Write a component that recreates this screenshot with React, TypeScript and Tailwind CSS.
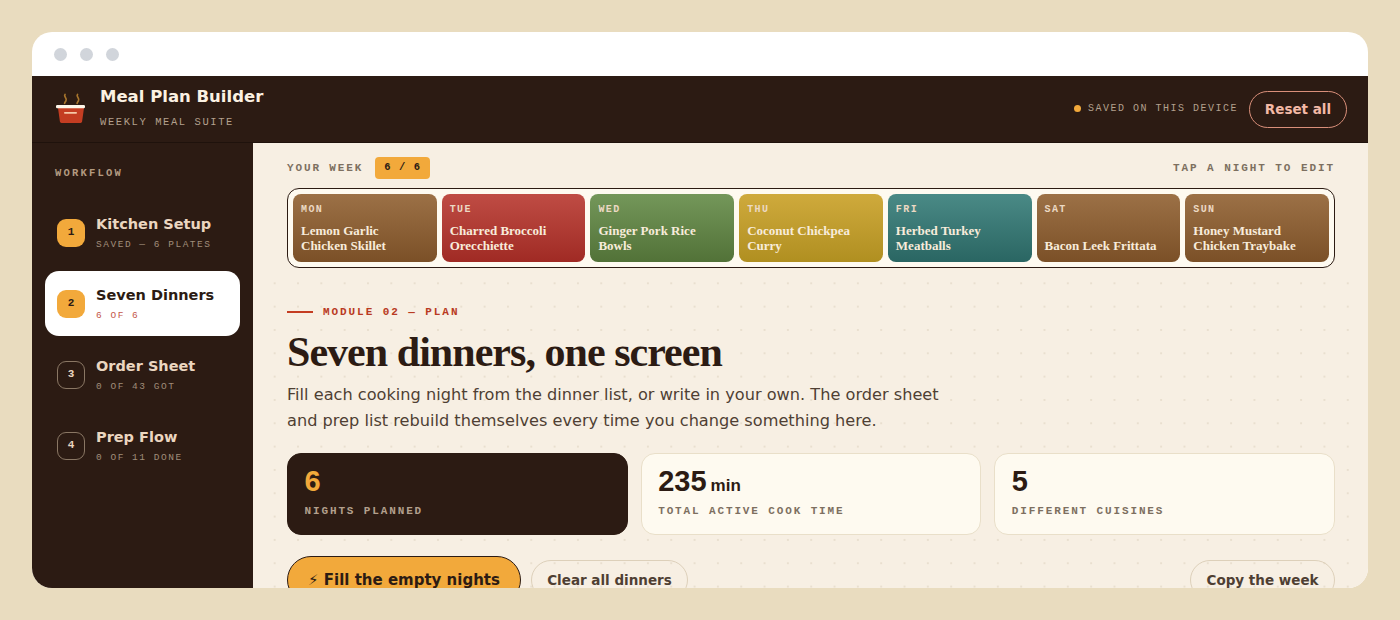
const nights = [
  { day: "MON", name: "Lemon Garlic Chicken Skillet", tone: "from-[#9c7146] to-[#7b5027]" },
  { day: "TUE", name: "Charred Broccoli Orecchiette", tone: "from-[#bf4c44] to-[#a02a24]" },
  { day: "WED", name: "Ginger Pork Rice Bowls", tone: "from-[#74975a] to-[#527238]" },
  { day: "THU", name: "Coconut Chickpea Curry", tone: "from-[#cfaa3c] to-[#b08f20]" },
  { day: "FRI", name: "Herbed Turkey Meatballs", tone: "from-[#4a8a86] to-[#2a6663]" },
  { day: "SAT", name: "Bacon Leek Frittata", tone: "from-[#9c7146] to-[#7b5027]" },
  { day: "SUN", name: "Honey Mustard Chicken Traybake", tone: "from-[#9c7146] to-[#7b5027]" },
]

const steps = [
  { n: 1, title: "Kitchen Setup", sub: "SAVED — 6 PLATES", done: true },
  { n: 2, title: "Seven Dinners", sub: "6 OF 6", active: true, done: true },
  { n: 3, title: "Order Sheet", sub: "0 OF 43 GOT" },
  { n: 4, title: "Prep Flow", sub: "0 OF 11 DONE" },
]

const mono = "font-['Liberation_Mono',monospace]"
const sans = "font-['DejaVu_Sans',sans-serif]"
const serif = "font-['Liberation_Serif',serif]"
const arial = "font-['Liberation_Sans',sans-serif]"

function Logo() {
  return (
    <svg width="32" height="32" viewBox="0 0 32 32" fill="none">
      <path d="M10 1.5c-1.8 2.2 2.6 3.6 1 6.2-.4.8-1 1.4-1.4 2.6M22.5 1.5c-1.8 2.2 2.6 3.6 1 6.2-.4.8-1 1.4-1.4 2.6" stroke="#a8752c" strokeWidth="1.7" strokeLinecap="round" />
      <path d="M3 15h26l-1.9 13.6A1.6 1.6 0 0 1 25.5 30h-19a1.6 1.6 0 0 1-1.6-1.4z" fill="#c43d22" />
      <rect x="1" y="12" width="29" height="3.2" rx="1.2" fill="#fdf6e9" />
      <rect x="9" y="19" width="13" height="1.7" rx="0.85" fill="#f6c9a8" />
    </svg>
  )
}

function Stat({ value, unit, label, dark }: { value: string; unit?: string; label: string; dark?: boolean }) {
  return (
    <div className={`h-[82px] rounded-[14px] border px-[16.5px] pt-[10px] ${dark ? "bg-[#2c1b13] border-[#2c1b13]" : "bg-[#fefaf0] border-[#e9dfc9]"}`}>
      <p className={`${arial} font-bold text-[29px] leading-[34px] ${dark ? "text-[#f2a93b]" : "text-[#2c1b13]"}`}>
        {value}
        {unit && <span className="text-[17px] leading-none ml-[4px]">{unit}</span>}
      </p>
      <p className={`${mono} font-bold mt-[6px] text-[11px] leading-[14px] tracking-[0.17em] ${dark ? "text-[#b3a08d]" : "text-[#7d6f60]"}`}>
        {label}
      </p>
    </div>
  )
}

export default function App() {
  return (
    <div className="h-[620px] bg-[#e9dcbf] p-8">
      <div className="h-full rounded-[20px] overflow-hidden flex flex-col bg-white">
        {/* barra do navegador */}
        <div className="h-11 shrink-0 flex items-center gap-[13px] pl-[22px]">
          <span className="w-[13px] h-[13px] rounded-full bg-[#d1d5db]" />
          <span className="w-[13px] h-[13px] rounded-full bg-[#d1d5db]" />
          <span className="w-[13px] h-[13px] rounded-full bg-[#d1d5db]" />
        </div>

        <header className="h-[67px] shrink-0 bg-[#2c1b13] border-b border-[#1f120c] flex items-center justify-between pl-[23px] pr-[21px]">
          <div className="flex items-center gap-[13px]">
            <Logo />
            <div className="pb-[4px]">
              <p className={`${sans} font-bold text-[16.5px] leading-[22px] text-[#fbf1e2]`}>Meal Plan Builder</p>
              <p className={`${mono} mt-[7px] text-[10.5px] leading-[14px] tracking-[0.15em] text-[#b3a08d]`}>WEEKLY MEAL SUITE</p>
            </div>
          </div>
          <div className="flex items-center gap-[11px]">
            <div className="flex items-center gap-[7px] pb-[2px]">
              <span className="w-[7px] h-[7px] rounded-full bg-[#f2a93b]" />
              <span className={`${mono} text-[10px] tracking-[0.15em] text-[#b3a08d]`}>SAVED ON THIS DEVICE</span>
            </div>
            <button className={`${sans} h-[37px] w-[98px] rounded-full border border-[#d98f7a] font-bold text-[13.5px] text-[#f3b9a6]`}>
              Reset all
            </button>
          </div>
        </header>

        <div className="flex-1 min-h-0 flex">
          <aside className="w-[221px] shrink-0 bg-[#2c1b13] pl-[13px] pr-[13px] pt-[23px]">
            <p className={`${mono} font-bold pl-[10px] text-[10.5px] leading-[14px] tracking-[0.21em] text-[#b39a80]`}>WORKFLOW</p>
            <nav className="mt-[20px] flex flex-col gap-[6px]">
              {steps.map((s) => (
                <div key={s.n} className={`h-[65px] rounded-[14px] flex items-center gap-[11px] pl-[12px] ${s.active ? "bg-white" : ""}`}>
                  <span
                    className={`${mono} font-bold w-[28px] h-[28px] rounded-[9px] flex items-center justify-center text-[11px] ${
                      s.done ? "bg-[#f2a93b] text-[#2c1b13]" : "border border-[#8a7764] text-[#ebd6c0]"
                    }`}
                  >
                    {s.n}
                  </span>
                  <div>
                    <p className={`${sans} font-bold text-[14.5px] leading-[20px] ${s.active ? "text-[#2c1b13]" : "text-[#ebd6c0]"}`}>{s.title}</p>
                    <p className={`${mono} mt-[4px] text-[9.5px] leading-[13px] tracking-[0.16em] ${s.active ? "text-[#c4574a]" : "text-[#a08d7a]"}`}>{s.sub}</p>
                  </div>
                </div>
              ))}
            </nav>
          </aside>

          <main className="flex-1 min-w-0 overflow-hidden bg-[#f7efe3] bg-[radial-gradient(#e9dfcf_1px,transparent_1px)] bg-[size:23.33px_23.33px] bg-[position:10px_12px] pl-[34px] pr-[33px]">
            {/* semana */}
            <div className="-ml-[34px] -mr-[33px] pl-[34px] pr-[33px] bg-[#f7efe3] pt-[14px] pb-[13px]">
              <div className="h-[22px] mb-[9px] flex items-center justify-between">
                <div className="flex items-center gap-[12px]">
                  <span className={`${mono} font-bold text-[11px] tracking-[0.17em] text-[#7d6f60]`}>YOUR WEEK</span>
                  <span className={`${mono} font-bold h-[22px] w-[55px] rounded-[4px] bg-[#f2a93b] flex items-center justify-center text-[10.5px] tracking-[0.1em] text-[#2c1b13]`}>6 / 6</span>
                </div>
                <span className={`${mono} font-bold text-[11px] tracking-[0.175em] text-[#7d6f60]`}>TAP A NIGHT TO EDIT</span>
              </div>
              <div className="h-[80px] rounded-[12px] border border-[#2c1b13] bg-[#fefaf0] p-[5px] grid grid-cols-7 gap-[5px]">
                {nights.map((n) => (
                  <div key={n.day} className={`rounded-[8px] bg-gradient-to-b ${n.tone} pl-[8px] pr-[12px] py-[9px] flex flex-col justify-between`}>
                    <p className={`${mono} font-bold text-[10px] leading-[13px] tracking-[0.14em] text-[#ecd9c4]`}>{n.day}</p>
                    <p className={`${serif} font-bold text-[13px] leading-[15px] text-[#f8ecdb]`}>{n.name}</p>
                  </div>
                ))}
              </div>
            </div>

            <div className="pt-[24px]">
              <div className="flex items-center gap-[10px]">
                <span className="w-[26px] h-[2px] bg-[#c43d22]" />
                <span className={`${mono} font-bold text-[11px] leading-[14px] tracking-[0.175em] text-[#b93a22]`}>MODULE 02 — PLAN</span>
              </div>
              <h1 className={`${serif} font-bold mt-[8px] text-[42px] leading-[50px] tracking-[-0.96px] text-[#2c1b13]`}>Seven dinners, one screen</h1>
              <p className={`${sans} mt-[5px] max-w-[680px] text-[16.16px] leading-[26px] text-[#4f3f33]`}>
                Fill each cooking night from the dinner list, or write in your own. The order sheet and prep list rebuild themselves every time you change something here.
              </p>

              <div className="mt-[19px] grid grid-cols-3 gap-[13px]">
                <Stat dark value="6" label="NIGHTS PLANNED" />
                <Stat value="235" unit="min" label="TOTAL ACTIVE COOK TIME" />
                <Stat value="5" label="DIFFERENT CUISINES" />
              </div>

              <div className="mt-[21px] flex items-center gap-[10px]">
                <button className={`${sans} h-[48px] w-[234px] rounded-full border border-[#2c1b13] bg-[#f2a93b] font-bold text-[15px] text-[#2c1b13]`}>
                  ⚡ Fill the empty nights
                </button>
                <button className={`${sans} h-[40px] w-[157px] rounded-full border border-[#ddd0ba] font-bold text-[13.5px] text-[#4f3f33]`}>
                  Clear all dinners
                </button>
                <button className={`${sans} ml-auto h-[40px] w-[145px] rounded-full border border-[#ddd0ba] font-bold text-[13.5px] text-[#4f3f33]`}>
                  Copy the week
                </button>
              </div>
            </div>
          </main>
        </div>
      </div>
    </div>
  )
}
